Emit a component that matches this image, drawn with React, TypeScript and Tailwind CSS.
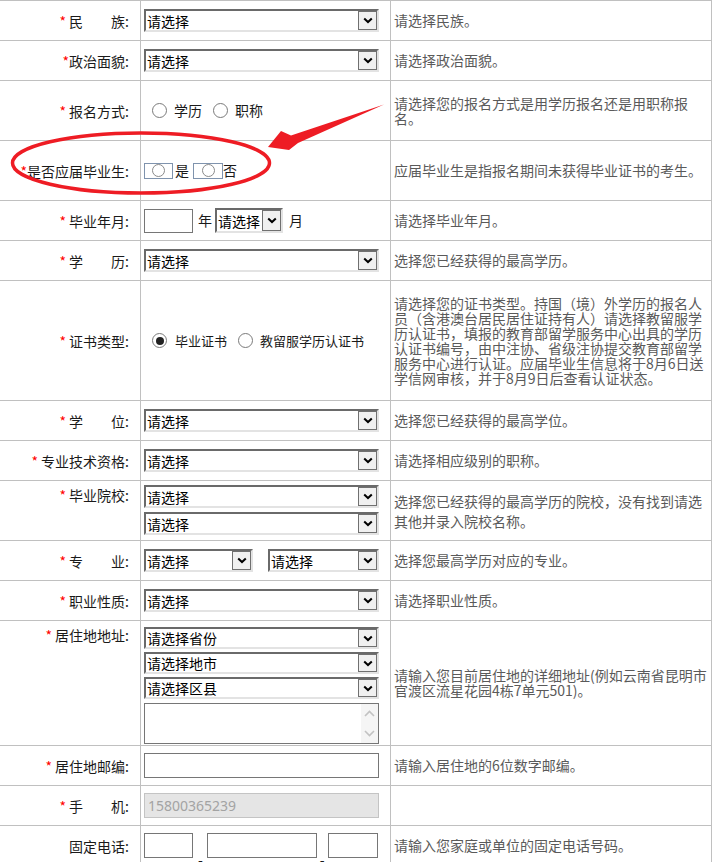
import React from "react";

const Chevron = () => (
  <svg width="10" height="7" viewBox="0 0 10 7">
    <path d="M1.2 1.4 L5 5 L8.8 1.4" fill="none" stroke="#000" strokeWidth="2" />
  </svg>
);

function Sel({ className, text = "请选择" }: { className: string; text?: string }) {
  return (
    <div
      className={`flex items-center bg-white border-2 border-t-[#6a6a6a] border-l-[#6a6a6a] border-r-[#e3e3e3] border-b-[#e3e3e3] ${className}`}
    >
      <span className="flex-1 min-w-0 pl-[1px] text-[14px] leading-[16px] text-black whitespace-nowrap">{text}</span>
      <span className="w-[19px] h-full shrink-0 flex items-center justify-center bg-[#f0f0f0] border border-[#707070]">
        <Chevron />
      </span>
    </div>
  );
}

function Radio({ checked = false }: { checked?: boolean }) {
  return (
    <span className="w-[15px] h-[15px] rounded-full border border-[#7a7a7a] bg-white flex items-center justify-center shrink-0">
      {checked && <span className="w-[8px] h-[8px] rounded-full bg-[#222]" />}
    </span>
  );
}

function Label({ star = true, sp = true, text }: { star?: boolean; sp?: boolean; text: string }) {
  return (
    <span className="whitespace-pre">
      {star && <span className="text-[#ff0000]">*</span>}
      {star && sp ? " " : ""}
      {text}:
    </span>
  );
}

function Row({
  h,
  label,
  field,
  desc,
  top = false,
  fieldClass = "flex items-center pl-[3px]",
}: {
  h: string;
  label: React.ReactNode;
  field: React.ReactNode;
  desc?: React.ReactNode;
  top?: boolean;
  fieldClass?: string;
}) {
  return (
    <div className={`grid grid-cols-[141px_250px_321px] border-b border-[#c0c0c0] ${h}`}>
      <div
        className={`border-r border-[#c0c0c0] flex justify-end pr-[11px] text-[14px] text-[#1a1a1a] ${
          top ? "items-start pt-[6px] leading-[16px]" : "items-center leading-[16px]"
        }`}
      >
        {label}
      </div>
      <div className={`border-r border-[#c0c0c0] ${fieldClass}`}>{field}</div>
      <div className="border-r border-[#c0c0c0] flex items-center pl-[3px] text-[14px] leading-[15px] text-[#5a5a5a]">
        {desc}
      </div>
    </div>
  );
}

const Desc = ({ children, lh = "leading-[15px]" }: { children: React.ReactNode; lh?: string }) => (
  <p className={`w-[316px] ${lh}`}>{children}</p>
);

export default function App() {
  return (
    <div className="relative w-[715px] h-[862px] overflow-hidden bg-white font-['Noto_Sans_CJK_SC','Microsoft_YaHei',sans-serif]">
      <div className="w-[712px] border-t border-[#c0c0c0]">
        <Row
          h="h-[40px]"
          label={<Label text="民　　族" />}
          field={<Sel className="w-[235px] h-[23px]" />}
          desc={<Desc>请选择民族。</Desc>}
        />
        <Row
          h="h-[40px]"
          label={<Label sp={false} text="政治面貌" />}
          field={<Sel className="w-[235px] h-[23px]" />}
          desc={<Desc>请选择政治面貌。</Desc>}
        />
        <Row
          h="h-[60px]"
          label={<Label text="报名方式" />}
          fieldClass="flex items-center pl-[11px] text-[14px] text-[#1a1a1a]"
          field={
            <>
              <Radio />
              <span className="ml-[7px]">学历</span>
              <span className="ml-[11px]">
                <Radio />
              </span>
              <span className="ml-[7px]">职称</span>
            </>
          }
          desc={<Desc>请选择您的报名方式是用学历报名还是用职称报名。</Desc>}
        />
        <Row
          h="h-[60px]"
          label={<Label sp={false} text="是否应届毕业生" />}
          fieldClass="flex items-center pl-[3px] text-[14px] text-[#1a1a1a]"
          field={
            <>
              <span className="w-[29px] h-[16px] border border-[#7f93ad] flex items-center justify-center">
                <span className="w-[13px] h-[13px] rounded-full border border-[#8a8a8a] bg-white" />
              </span>
              <span className="ml-[2px]">是</span>
              <span className="ml-[4px] w-[30px] h-[16px] border border-[#7f93ad] flex items-center justify-center">
                <span className="w-[13px] h-[13px] rounded-full border border-[#8a8a8a] bg-white" />
              </span>
              <span>否</span>
            </>
          }
          desc={<Desc>应届毕业生是指报名期间未获得毕业证书的考生。</Desc>}
        />
        <Row
          h="h-[40px]"
          label={<Label text="毕业年月" />}
          fieldClass="flex items-center pl-[3px] text-[14px] text-[#1a1a1a]"
          field={
            <>
              <span className="w-[49px] h-[24px] border border-[#767676] bg-white" />
              <span className="ml-[5px]">年</span>
              <Sel className="ml-[3px] w-[68px] h-[25px]" />
              <span className="ml-[6px]">月</span>
            </>
          }
          desc={<Desc>请选择毕业年月。</Desc>}
        />
        <Row
          h="h-[40px]"
          label={<Label text="学　　历" />}
          field={<Sel className="w-[235px] h-[23px]" />}
          desc={<Desc>选择您已经获得的最高学历。</Desc>}
        />
        <Row
          h="h-[120px]"
          label={<Label text="证书类型" />}
          fieldClass="flex items-center pl-[11px] text-[13px] text-[#1a1a1a]"
          field={
            <>
              <Radio checked />
              <span className="ml-[8px]">毕业证书</span>
              <span className="ml-[11px]">
                <Radio />
              </span>
              <span className="ml-[7px]">教留服学历认证书</span>
            </>
          }
          desc={
            <Desc>
              请选择您的证书类型。持国（境）外学历的报名人员（含港澳台居民居住证持有人）请选择教留服学历认证书，填报的教育部留学服务中心出具的学历认证书编号，由中注协、省级注协提交教育部留学服务中心进行认证。应届毕业生信息将于8月6日送学信网审核，并于8月9日后查看认证状态。
            </Desc>
          }
        />
        <Row
          h="h-[40px]"
          label={<Label text="学　　位" />}
          field={<Sel className="w-[235px] h-[23px]" />}
          desc={<Desc>选择您已经获得的最高学位。</Desc>}
        />
        <Row
          h="h-[40px]"
          label={<Label text="专业技术资格" />}
          field={<Sel className="w-[235px] h-[23px]" />}
          desc={<Desc>请选择相应级别的职称。</Desc>}
        />
        <Row
          h="h-[60px]"
          top
          label={<Label text="毕业院校" />}
          fieldClass="flex flex-col gap-[4px] pt-[4px] pl-[3px]"
          field={
            <>
              <Sel className="w-[235px] h-[23px]" />
              <Sel className="w-[235px] h-[23px]" />
            </>
          }
          desc={<Desc lh="leading-[20px]">选择您已经获得的最高学历的院校，没有找到请选其他并录入院校名称。</Desc>}
        />
        <Row
          h="h-[40px]"
          label={<Label text="专　　业" />}
          fieldClass="flex items-center pl-[3px] gap-[15px]"
          field={
            <>
              <Sel className="w-[109px] h-[23px]" />
              <Sel className="w-[111px] h-[23px]" />
            </>
          }
          desc={<Desc>选择您最高学历对应的专业。</Desc>}
        />
        <Row
          h="h-[40px]"
          label={<Label text="职业性质" />}
          field={<Sel className="w-[235px] h-[23px]" />}
          desc={<Desc>请选择职业性质。</Desc>}
        />
        <Row
          h="h-[125px]"
          top
          label={<Label text="居住地地址" />}
          fieldClass="flex flex-col pt-[6px] pl-[3px]"
          field={
            <>
              <Sel className="w-[235px] h-[22px]" text="请选择省份" />
              <Sel className="mt-[3px] w-[235px] h-[22px]" text="请选择地市" />
              <Sel className="mt-[3px] w-[235px] h-[22px]" text="请选择区县" />
              <div className="mt-[4px] w-[235px] h-[41px] border border-[#767676] bg-white flex justify-end">
                <div className="w-[17px] h-full bg-[#f5f5f5] flex flex-col items-center justify-between py-[6px]">
                  <svg width="11" height="7" viewBox="0 0 11 7">
                    <path d="M1 6 L5.5 1.5 L10 6" fill="none" stroke="#c2c2c2" strokeWidth="1.6" />
                  </svg>
                  <svg width="11" height="7" viewBox="0 0 11 7">
                    <path d="M1 1 L5.5 5.5 L10 1" fill="none" stroke="#c2c2c2" strokeWidth="1.6" />
                  </svg>
                </div>
              </div>
            </>
          }
          desc={<Desc>请输入您目前居住地的详细地址(例如云南省昆明市官渡区流星花园4栋7单元501)。</Desc>}
        />
        <Row
          h="h-[40px]"
          label={<Label text="居住地邮编" />}
          field={<span className="w-[235px] h-[25px] border border-[#767676] bg-white" />}
          desc={<Desc>请输入居住地的6位数字邮编。</Desc>}
        />
        <Row
          h="h-[40px]"
          label={<Label text="手　　机" />}
          field={
            <span className="w-[235px] h-[25px] border border-[#c4c4c4] bg-[#e5e5e5] flex items-center pl-[3px] text-[14px] leading-[18px] text-[#a3a3a3] font-['Noto_Sans',sans-serif]">
              15800365239
            </span>
          }
          desc={null}
        />
        <Row
          h="h-[40px]"
          label={<Label star={false} text="固定电话" />}
          fieldClass="flex items-center pl-[3px] text-[14px] text-[#1a1a1a]"
          field={
            <>
              <span className="w-[49px] h-[25px] border border-[#767676] bg-white" />
              <span className="self-end mb-[-1px] ml-[5px] mr-[4px] leading-[14px]">-</span>
              <span className="w-[110px] h-[25px] border border-[#767676] bg-white" />
              <span className="self-end mb-[-1px] ml-[3px] mr-[3px] leading-[14px]">-</span>
              <span className="w-[50px] h-[25px] border border-[#767676] bg-white" />
            </>
          }
          desc={<Desc>请输入您家庭或单位的固定电话号码。</Desc>}
        />
      </div>

      <svg
        className="absolute left-0 top-0 pointer-events-none"
        width="715"
        height="862"
        viewBox="0 0 715 862"
      >
        <ellipse cx="141" cy="163" rx="128.5" ry="30" fill="none" stroke="#ee1c24" strokeWidth="3.5" />
        <polygon
          points="268,147 281,131 291,135.5 384,104.5 298,143 289,150"
          fill="#ee1c24"
        />
      </svg>
    </div>
  );
}
